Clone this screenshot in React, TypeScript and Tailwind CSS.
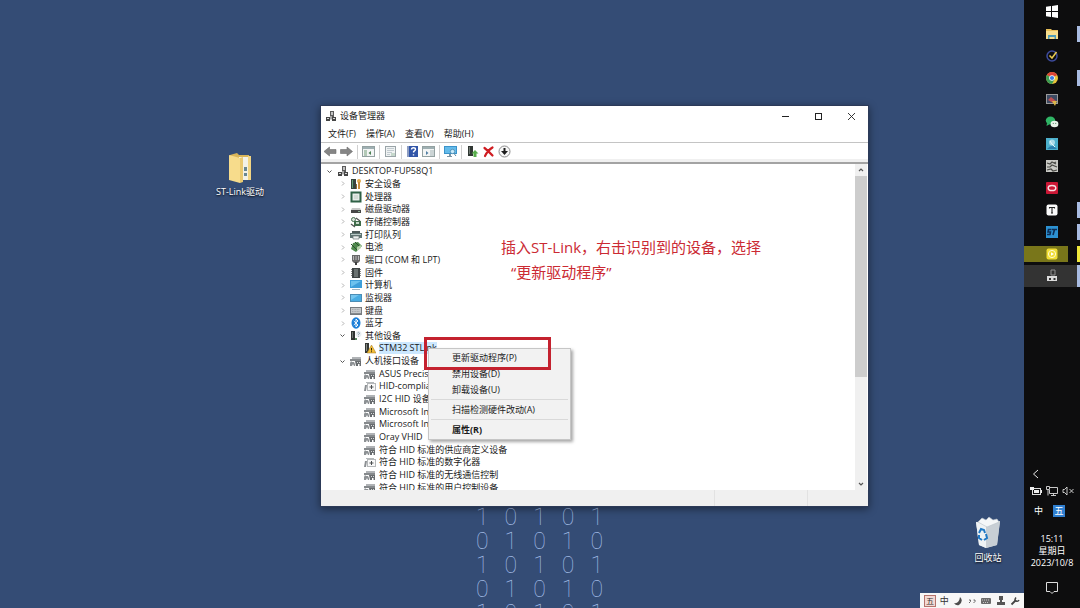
import type { ReactNode } from "react";
import clsx from "clsx";

type IconName =
    | "pc" | "security" | "cpu" | "disk" | "storage" | "printer" | "battery" | "port" | "firmware"
    | "computer" | "monitor" | "keyboard" | "bluetooth" | "other" | "warning" | "hid" | "hidDoc";

type TreeRow = {
    level: 0 | 1 | 2;
    icon: IconName;
    label: string;
    state?: "open" | "closed";
    selected?: boolean;
};

const rows: TreeRow[] = [
    { level: 0, icon: "pc", label: "DESKTOP-FUP58Q1", state: "open" },
    { level: 1, icon: "security", label: "安全设备", state: "closed" },
    { level: 1, icon: "cpu", label: "处理器", state: "closed" },
    { level: 1, icon: "disk", label: "磁盘驱动器", state: "closed" },
    { level: 1, icon: "storage", label: "存储控制器", state: "closed" },
    { level: 1, icon: "printer", label: "打印队列", state: "closed" },
    { level: 1, icon: "battery", label: "电池", state: "closed" },
    { level: 1, icon: "port", label: "端口 (COM 和 LPT)", state: "closed" },
    { level: 1, icon: "firmware", label: "固件", state: "closed" },
    { level: 1, icon: "computer", label: "计算机", state: "closed" },
    { level: 1, icon: "monitor", label: "监视器", state: "closed" },
    { level: 1, icon: "keyboard", label: "键盘", state: "closed" },
    { level: 1, icon: "bluetooth", label: "蓝牙", state: "closed" },
    { level: 1, icon: "other", label: "其他设备", state: "open" },
    { level: 2, icon: "warning", label: "STM32 STLink", selected: true },
    { level: 1, icon: "hid", label: "人机接口设备", state: "open" },
    { level: 2, icon: "hid", label: "ASUS Precisi" },
    { level: 2, icon: "hidDoc", label: "HID-complia" },
    { level: 2, icon: "hid", label: "I2C HID 设备" },
    { level: 2, icon: "hid", label: "Microsoft Inp" },
    { level: 2, icon: "hid", label: "Microsoft Inp" },
    { level: 2, icon: "hid", label: "Oray VHID" },
    { level: 2, icon: "hid", label: "符合 HID 标准的供应商定义设备" },
    { level: 2, icon: "hidDoc", label: "符合 HID 标准的数字化器" },
    { level: 2, icon: "hid", label: "符合 HID 标准的无线通信控制" },
    { level: 2, icon: "hid", label: "符合 HID 标准的用户控制设备" }
];

const indent = { 0: "pl-1", 1: "pl-[17px]", 2: "pl-[31px]" };

const deviceIcons: Record<IconName, ReactNode> = {
    pc: (
        <>
            <path d="M5 1h4v6H5z" fill="#5b5b5b" />
            <path d="M6 2h2v3H6z" fill="#c4c4c4" />
            <path d="M5 6h2v3H5z" fill="#a5a5a5" />
            <path d="M1 7h4v4H1zM7 7h4v4H7z" fill="#454545" />
            <path d="M2 8h2v1H2zM8 8h2v1H8zM5 9h2v1H5z" fill="#d8d8d8" />
        </>
    ),
    security: (
        <>
            <path d="M1 1h5v10H1z" fill="#37433b" />
            <path d="M2 2h1v8H2z" fill="#62a072" />
            <circle cx="9" cy="3" r="2" fill="#e0a94b" />
            <path d="M8 4h2v7H8z" fill="#c98e3a" />
            <path d="M6 6h1v5H6z" fill="#8f6a35" />
        </>
    ),
    cpu: (
        <>
            <rect x="1.5" y="1.5" width="9" height="9" fill="#e6ece8" stroke="#2f6146" strokeWidth="2" />
            <rect x="4" y="4" width="4" height="4" fill="#d3dbd5" />
        </>
    ),
    disk: (
        <>
            <path d="M2 5h8l1 2H1z" fill="#c8c8c8" />
            <path d="M1 7h10v3H1z" fill="#474747" />
            <path d="M8 8h2v1H8z" fill="#8fb59a" />
        </>
    ),
    storage: (
        <>
            <circle cx="3.5" cy="3.5" r="2" fill="#dbe5dc" stroke="#476d50" />
            <path d="M4 5h7v5H4z" fill="#3f6b4a" />
            <path d="M1 8l4 3M6 2l4 3" stroke="#555" strokeWidth="1.3" />
            <path d="M6 6h3v2H6z" fill="#c7d7ca" />
        </>
    ),
    printer: (
        <>
            <path d="M2 2h8v2H2z" fill="#4d5a5a" />
            <path d="M0 4h12v5H0z" fill="#5e7472" />
            <path d="M1 5h10v1H1z" fill="#b9c9c7" />
            <path d="M3 7h6v3H3z" fill="#eef2f2" stroke="#6a7a79" strokeWidth=".7" />
        </>
    ),
    battery: (
        <>
            <path d="M3 2l5-1 4 4-6 6-5-3z" fill="#4f8a4d" />
            <path d="M1 3l6 6M5 1l5 5" stroke="#2c4d2e" />
            <path d="M7 6l4-2v3L7 10z" fill="#b7d2ab" />
        </>
    ),
    port: (
        <>
            <path d="M2 1h8v6l-2 2H4L2 7z" fill="#6a6a6a" />
            <path d="M3 2h1v4H3zM5.500 2h1v4h-1zM8 2h1v4H8z" fill="#b8b8b8" />
            <path d="M5 8h2v3H5z" fill="#3f3f3f" />
        </>
    ),
    firmware: (
        <>
            <path d="M2 1h8v10H2z" fill="#3f4444" />
            <path d="M4 2h4v8H4z" fill="#6b7271" />
            <path d="M1 2h1v1H1zM1 4h1v1H1zM1 6h1v1H1zM1 8h1v1H1zM10 2h1v1h-1zM10 4h1v1h-1zM10 6h1v1h-1zM10 8h1v1h-1z" fill="#8c8c8c" />
        </>
    ),
    computer: (
        <>
            <path d="M0 1h12v8H0z" fill="#3e9fda" />
            <path d="M1 2h10L1 8z" fill="#6dc2ee" />
            <path d="M2 10h8v1H2z" fill="#9fb4c2" />
        </>
    ),
    monitor: (
        <>
            <path d="M0 2h12v8H0z" fill="#4c8db5" />
            <path d="M1 3h10v6H1z" fill="#49ace2" />
            <path d="M1 3h8L1 8z" fill="#75c6ef" />
        </>
    ),
    keyboard: (
        <>
            <rect x=".5" y="2.500" width="11" height="7" fill="#c6c8ca" stroke="#777b7f" />
            <path d="M2 4.500h8M2 6.500h8" stroke="#a5a8ab" strokeDasharray="1 .6" />
            <path d="M1 8h10v1H1z" fill="#85898c" />
        </>
    ),
    bluetooth: (
        <>
            <ellipse cx="6" cy="6" rx="4.500" ry="5.700" fill="#1c7fd8" />
            <path d="M3.800 4l4.200 4-2 2V2l2 2-4.200 4" fill="none" stroke="#fff" strokeWidth=".9" />
        </>
    ),
    other: (
        <>
            <path d="M1 1h4v9H1z" fill="#2f3331" />
            <path d="M2 2h1v6H2z" fill="#6f7773" />
            <path d="M5 8h2v2H5z" fill="#5a8a62" />
            <circle cx="8.500" cy="4" r="3" fill="#e9eef1" />
            <path d="M7.500 3q1-1.300 2 0 0 1-1 1.500v.6M8.500 6v.6" fill="none" stroke="#7890a0" strokeWidth=".8" />
        </>
    ),
    warning: (
        <>
            <path d="M1 1h4v10H1z" fill="#353835" />
            <path d="M2 2h1v7H2z" fill="#858a86" />
            <path d="M7.500 3l4.500 8H3z" fill="#f0bd38" stroke="#a07721" strokeWidth=".5" />
            <path d="M7.500 6v2.500M7.500 9.300v.9" stroke="#2f2510" />
        </>
    ),
    hid: (
        <>
            <path d="M2 2h9v2H2z" fill="#b0b3b6" />
            <path d="M0 4h11v2H0z" fill="#85898c" />
            <path d="M1 6l1 1h2l1 2v2H4L3 9 2 11H0V8z" fill="#8d9194" />
            <path d="M5 6h6v5H9.500V9H8v2H6z" fill="#686c6f" />
            <path d="M7 7h1v1H7zM9 7h1v1H9z" fill="#d5d8d9" />
        </>
    ),
    hidDoc: (
        <>
            <path d="M2 2h8v1H2z" fill="#b4b8ba" />
            <path d="M1 5h2l-1 6H0z" fill="#8b8f92" />
            <rect x="3.500" y="3.500" width="8" height="7" fill="#f8f8f8" stroke="#b5b8ba" />
            <path d="M7.500 5v4M5.500 7h4" stroke="#4a4e51" />
        </>
    )
};

function DeviceIcon({ name }: { name: IconName }) {
    return (
        <svg viewBox="0 0 12 12" className="size-3 shrink-0" aria-hidden="true">
            {deviceIcons[name]}
        </svg>
    );
}

function Chevron({ state }: { state?: "open" | "closed" }) {
    return (
        <svg viewBox="0 0 9 9" className="size-[9px] shrink-0" aria-hidden="true">
            {state === "open" && <path d="M2.500 3.500l2 2 2-2" fill="none" stroke="#555" />}
            {state === "closed" && <path d="M4 2.500l2 2-2 2" fill="none" stroke="#a8a8a8" strokeWidth=".9" />}
        </svg>
    );
}

function DeviceTree() {
    return (
        <ul role="tree" aria-label="设备" className="grid h-[330px] auto-rows-fr pt-px">
            {rows.map((row, i) => (
                <li
                    key={i}
                    role="treeitem"
                    aria-level={row.level + 1}
                    aria-selected={!!row.selected}
                    className={clsx("flex min-h-0 items-center gap-[3px] leading-3 whitespace-nowrap", indent[row.level])}
                >
                    {row.level < 2 && <Chevron state={row.state} />}
                    {row.level === 2 && <span className="w-[9px]" />}
                    <DeviceIcon name={row.icon} />
                    <span className={clsx(row.selected && "bg-[#cce8ff]")}>{row.label}</span>
                </li>
            ))}
        </ul>
    );
}

const panel = (
    <>
        <rect x=".5" y="1.500" width="12" height="10" fill="#f3f5f5" stroke="#93a1a1" />
        <path d="M1 2h11v2H1z" fill="#9fb0b3" />
    </>
);

const tools: { label: string; art: ReactNode; divider?: boolean }[] = [
    { label: "后退", art: <path d="M0 6.500L5.500 2v2.500H12v4H5.500V11z" fill="#858585" stroke="#6c6c6c" strokeWidth=".6" /> },
    { label: "前进", art: <path d="M12.500 6.500L7 2v2.500H.5v4H7V11z" fill="#858585" stroke="#6c6c6c" strokeWidth=".6" />, divider: true },
    {
        label: "显示/隐藏控制台树",
        art: <>{panel}<path d="M2 5h3v6H2z" fill="#b3c9b7" /><path d="M9 6L6.500 8 9 10z" fill="#4b8154" /></>,
        divider: true
    },
    {
        label: "属性",
        art: (
            <>
                <rect x="1.500" y="1.500" width="10" height="10" fill="#f0f3f3" stroke="#9aa4a8" />
                <path d="M3 3.500h7M3 5.500h7M3 7.500h5M3 9.500h3" stroke="#c2cbd0" />
                <path d="M7 8h4v3H7z" fill="#c6d8cc" />
            </>
        ),
        divider: true
    },
    {
        label: "帮助",
        art: (
            <>
                <path d="M1 1h11v11H1z" fill="#3155a8" />
                <path d="M1 1h2v11H1z" fill="#8d9dc2" />
                <path d="M5.500 4.500q0-1.800 2-1.800t2 1.600q0 1-1.900 2.300v1M7.500 9.200v1.300" fill="none" stroke="#fff" strokeWidth="1.400" />
            </>
        )
    },
    {
        label: "显示/隐藏操作窗格",
        art: <>{panel}<path d="M8 5h4v6H8z" fill="#cbd4d5" /><path d="M4 6l2.500 2L4 10z" fill="#527fa4" /></>,
        divider: true
    },
    {
        label: "扫描检测硬件改动",
        art: (
            <>
                <path d="M0 1h13v8H0z" fill="#3b93ca" />
                <path d="M1 2h11v6H1z" fill="#64bbea" />
                <path d="M3 11h5v1H3zM5 9h2v2H5z" fill="#7c93a2" />
                <circle cx="8.500" cy="6.500" r="2.200" fill="#c8eafa" stroke="#3b7ba5" strokeWidth=".7" />
                <path d="M10 8.500l2 2.500" stroke="#5c87a2" />
            </>
        ),
        divider: true
    },
    {
        label: "更新驱动程序",
        art: (
            <>
                <path d="M2 1h5v10H2z" fill="#303733" />
                <path d="M3 2h1v7H3z" fill="#707a73" />
                <path d="M9 5l3.500 3.500h-2V12h-3V8.500h-2z" fill="#58ad4c" />
            </>
        )
    },
    { label: "卸载设备", art: <path d="M2.500 3q4 3 8 7.500M10.500 2.500Q6 5 3 11" fill="none" stroke="#cf1d22" strokeWidth="2.200" strokeLinecap="round" /> },
    {
        label: "禁用设备",
        art: (
            <>
                <circle cx="6.500" cy="6.500" r="5.500" fill="#f7f7f7" stroke="#8c8c8c" />
                <path d="M5.500 3h2v3h2.500L6.500 10 3 6h2.500z" fill="#1d1d1d" />
            </>
        )
    }
];

function Toolbar() {
    return (
        <div role="toolbar" className="flex h-4 items-center gap-[3px] pt-px pl-[3px]">
            {tools.map((tool) => (
                <div key={tool.label} className="flex items-center gap-1">
                    <button type="button" aria-label={tool.label} title={tool.label}>
                        <svg viewBox="0 0 13 13" className="size-[13px]" aria-hidden="true">{tool.art}</svg>
                    </button>
                    {tool.divider && <span className="mr-px h-3.5 w-px bg-[#d0d0d0]" />}
                </div>
            ))}
        </div>
    );
}

function DeviceManager() {
    return (
        <section
            aria-label="设备管理器"
            className="absolute top-[105px] left-[320px] flex h-[402px] w-[549px] flex-col border border-[#2c3a58] bg-white text-[9px] text-[#1a1a1a] shadow-[0_2px_8px_rgba(0,0,0,0.45)]"
        >
            {/* title bar */}
            <header className="flex h-5 shrink-0 items-center gap-[3px] pl-1">
                <DeviceIcon name="pc" />
                <h1 className="flex-1 leading-3">设备管理器</h1>
                <div className="flex text-[#222]">
                    <button type="button" aria-label="最小化" className="flex w-[33px] justify-center">
                        <svg viewBox="0 0 9 9" className="size-[9px]"><path d="M1 4.500h7" stroke="currentColor" /></svg>
                    </button>
                    <button type="button" aria-label="最大化" className="flex w-[33px] justify-center">
                        <svg viewBox="0 0 9 9" className="size-[9px]"><rect x="1.500" y="1.500" width="6" height="6" fill="none" stroke="currentColor" /></svg>
                    </button>
                    <button type="button" aria-label="关闭" className="flex w-[33px] justify-center">
                        <svg viewBox="0 0 9 9" className="size-[9px]"><path d="M1 1l7 7M8 1L1 8" stroke="currentColor" strokeWidth=".9" /></svg>
                    </button>
                </div>
            </header>

            {/* menu bar */}
            <nav className="flex h-[17px] shrink-0 items-center gap-2.5 border-b border-[#c4c4c4] pl-[7px] leading-3">
                <button type="button">文件(F)</button>
                <button type="button">操作(A)</button>
                <button type="button">查看(V)</button>
                <button type="button">帮助(H)</button>
            </nav>

            <Toolbar />
            <div className="h-[5px] shrink-0 border-b-2 border-[#a3a3a3] bg-[#f0f0f0]" />

            {/* device tree + scrollbar */}
            <div className="flex min-h-0 flex-1">
                <div className="flex-1 overflow-hidden">
                    <DeviceTree />
                </div>
                <div className="mr-px flex w-3 flex-col bg-[#f0f0f0] text-[#555]">
                    <button type="button" aria-label="向上滚动" className="flex h-3 items-center justify-center">
                        <svg viewBox="0 0 8 8" className="size-2"><path d="M2 5l2-2 2 2" fill="none" stroke="currentColor" strokeWidth="1.200" /></svg>
                    </button>
                    <div className="flex-1">
                        <div className="h-2/3 bg-[#cdcdcd]" />
                    </div>
                    <button type="button" aria-label="向下滚动" className="flex h-3 items-center justify-center">
                        <svg viewBox="0 0 8 8" className="size-2"><path d="M2 3l2 2 2-2" fill="none" stroke="currentColor" strokeWidth="1.200" /></svg>
                    </button>
                </div>
            </div>

            {/* status bar */}
            <footer className="flex h-4 shrink-0 bg-[#f0f0f0]">
                <span className="flex-1 border-r border-[#e2e2e2]" />
                <span className="w-[93px] border-r border-[#e2e2e2]" />
                <span className="w-[60px]" />
            </footer>
        </section>
    );
}

function ContextMenu() {
    return (
        <div
            role="menu"
            className="absolute top-[348px] left-[428px] flex w-[143px] flex-col border border-[#c6c6c6] bg-[#f2f2f2] py-px text-[9px] leading-3 text-[#1a1a1a] shadow-[2px_2px_3px_rgba(0,0,0,0.35)]"
        >
            <button type="button" role="menuitem" className="h-4 pl-[23px] text-left">更新驱动程序(P)</button>
            <button type="button" role="menuitem" className="h-4 pl-[23px] text-left">禁用设备(D)</button>
            <button type="button" role="menuitem" className="h-4 pl-[23px] text-left">卸载设备(U)</button>
            <hr className="mx-0.5 my-px border-[#d9d9d9]" />
            <button type="button" role="menuitem" className="h-[17px] pl-[23px] text-left">扫描检测硬件改动(A)</button>
            <hr className="mx-0.5 my-px border-[#d9d9d9]" />
            <button type="button" role="menuitem" className="h-[17px] pl-[23px] text-left font-bold">属性(R)</button>
        </div>
    );
}

const apps: { label: string; art: ReactNode; mark?: string; tile?: string }[] = [
    { label: "开始", art: <path d="M1 1.800l5-.8v5H1zM7 .9l6-.9v6H7zM1 7h5v5l-5-.8zM7 7h6v6l-6-.9z" fill="#fff" /> },
    {
        label: "文件资源管理器",
        art: (
            <>
                <path d="M1 2h5l1 1h6v9H1z" fill="#e5bd57" />
                <path d="M1 4h12v8H1z" fill="#f7de8e" />
                <path d="M3 8h8v4H9.500v-2h-5v2H3z" fill="#4f9cb8" />
            </>
        ),
        mark: "bg-[#a9bce2]"
    },
    {
        label: "待办",
        art: (
            <>
                <circle cx="7" cy="7" r="5" fill="none" stroke="#3d4b9d" strokeWidth="1.500" />
                <path d="M4.500 6.500L7 9l4.500-6" fill="none" stroke="#e8c951" strokeWidth="1.500" />
            </>
        )
    },
    {
        label: "Chrome",
        art: (
            <>
                <circle cx="7" cy="7" r="6" fill="#e8c33a" />
                <path d="M7 7L1.800 4a6 6 0 0 1 10.400 0z" fill="#dc4437" />
                <path d="M7 7L1.800 4A6 6 0 0 0 7 13l2.500-4.500z" fill="#3b9b54" />
                <circle cx="7" cy="7" r="2.800" fill="#fff" />
                <circle cx="7" cy="7" r="2.100" fill="#3f7ee0" />
            </>
        ),
        mark: "bg-[#a9bce2]"
    },
    {
        label: "远程桌面",
        art: (
            <>
                <path d="M1 1h12v10H1z" fill="#9a9a9a" />
                <path d="M2 2h10v8H2z" fill="#3d4a62" />
                <path d="M3 7l3-3 5 4-3 2z" fill="#c04f50" />
                <path d="M7 8h5l-2 5z" fill="#dbb64a" />
            </>
        )
    },
    {
        label: "微信",
        art: (
            <>
                <ellipse cx="5.500" cy="5.500" rx="4.700" ry="3.900" fill="#2fb565" />
                <path d="M2 8l-.5 3L5 9z" fill="#2fb565" />
                <ellipse cx="9.500" cy="9" rx="3.900" ry="3.200" fill="#e9f3ea" />
                <path d="M8.200 8.400h.1M10.700 8.400h.1" stroke="#3a6e4b" strokeLinecap="round" />
            </>
        )
    },
    {
        label: "图片",
        art: (
            <>
                <path d="M1 1h12v12H1z" fill="#4cb0cc" />
                <circle cx="7" cy="5.500" r="3" fill="#a9dbe8" />
                <path d="M2 12q5-6 10 0z" fill="#2b7fae" />
                <path d="M5 4l2 3 3 3" fill="none" stroke="#e9f7fa" />
            </>
        )
    },
    {
        label: "地图",
        art: (
            <>
                <path d="M1 1h12v12H1z" fill="#c9c9c4" />
                <path d="M2 4l3 1 2-2 4 2M2 8h3l2-2 5 2M2 11l4-1 2 2 4-1M9 4l2-1" fill="none" stroke="#4a4a46" strokeWidth="1.200" />
            </>
        )
    },
    {
        label: "向日葵",
        art: (
            <>
                <rect x="1" y="1" width="12" height="12" rx="1" fill="#cb1735" />
                <ellipse cx="7" cy="7" rx="3.800" ry="2.600" fill="none" stroke="#f7dfe3" strokeWidth="1.500" />
            </>
        )
    },
    {
        label: "Typora",
        art: (
            <>
                <rect x="1.500" y="1.500" width="11" height="11" rx="2" fill="#fafafa" />
                <path d="M4.500 5.500V4.500h5v1M7 4.500v5.500M6 10h2" fill="none" stroke="#222" strokeWidth="1.100" />
            </>
        ),
        mark: "bg-[#a9bce2]"
    },
    {
        label: "STM32",
        art: (
            <>
                <path d="M1 1h12v12H1z" fill="#2c91d1" />
                <path d="M6.500 4.500H3.500L3 7h2.500L5 9.500H2M7 4.500h5M9.500 4.500L8 10" fill="none" stroke="#0c2d55" strokeWidth="1.600" />
            </>
        ),
        mark: "bg-[#a9bce2]"
    },
    {
        label: "录屏",
        art: (
            <>
                <rect x="1.500" y="1.500" width="11" height="11" rx="2" fill="#f0dc32" />
                <circle cx="7" cy="7" r="3.600" fill="none" stroke="#fffbd0" />
                <path d="M6 5.200L9 7 6 8.800z" fill="#fff" />
            </>
        ),
        mark: "bg-[#f0e83c]",
        tile: "bg-[#79761a]"
    },
    {
        label: "设备管理器",
        art: (
            <>
                <path d="M6 1h4v5H6z" fill="none" stroke="#909090" />
                <path d="M2 7h10v5H2z" fill="#dcdcdc" />
                <path d="M4 9h2v2H4zM8.500 9h2v2h-2z" fill="#333" />
            </>
        ),
        mark: "bg-[#a9bce2]",
        tile: "bg-[#333333]"
    }
];

function Taskbar() {
    return (
        <aside className="flex w-14 shrink-0 flex-col bg-[#0d0d0e] text-white">
            <nav aria-label="任务栏" className="flex flex-col pt-px">
                {apps.map((app, i) => (
                    <button
                        key={app.label}
                        type="button"
                        aria-label={app.label}
                        className={clsx("flex h-[22px] items-center", i === 12 && app.tile)}
                    >
                        <span className={clsx("flex h-4 w-11 items-center justify-end pr-[9px]", i !== 12 && app.tile)}>
                            <svg viewBox="0 0 14 14" className="size-3.5" aria-hidden="true">{app.art}</svg>
                        </span>
                        <span className={clsx("ml-auto w-[3px]", i === 12 ? "h-[22px]" : "h-4", app.mark)} />
                    </button>
                ))}
            </nav>

            {/* tray */}
            <div className="mt-auto flex flex-col pb-[13px]">
                <button type="button" aria-label="显示隐藏的图标" className="ml-[7px] w-[9px]">
                    <svg viewBox="0 0 9 10" className="h-2.5 w-[9px]"><path d="M7 1L2.500 5 7 9" fill="none" stroke="#e8e8e8" /></svg>
                </button>
                <div className="mt-[7px] flex items-center justify-between px-1.5">
                    <svg viewBox="0 0 12 10" className="h-2.5 w-3" aria-label="电池">
                        <rect x="2.500" y="2.500" width="8" height="6" fill="none" stroke="#ddd" />
                        <path d="M4 4h5v3H4zM11 4h1v3h-1zM0 1h4v3H0z" fill="#eee" />
                    </svg>
                    <svg viewBox="0 0 12 10" className="h-2.5 w-3" aria-label="网络">
                        <path d="M4 1.500h7.500v6H3.500V4M5 9.500h5M7.500 7.500v2M.5 .5h3v3h-3zM2 4v5.500" fill="none" stroke="#ddd" strokeWidth=".9" />
                    </svg>
                    <svg viewBox="0 0 12 10" className="h-2.5 w-3" aria-label="静音">
                        <path d="M1 3.500h1.500L5 1v8L2.500 6.500H1zM7.500 3l4 4M11.500 3l-4 4" fill="none" stroke="#ddd" strokeWidth=".9" />
                    </svg>
                </div>
                <div className="mt-[9px] flex items-center gap-2.5 pl-2.5 text-[9px] leading-3">
                    <button type="button">中</button>
                    <button type="button" className="w-3 bg-[#2f7fd0] text-center">五</button>
                </div>
                <div className="mt-4 text-center text-[9px] leading-3">
                    <div>15:11</div>
                    <div>星期日</div>
                    <div>2023/10/8</div>
                </div>
                <button type="button" aria-label="通知" className="mt-3 flex justify-center">
                    <svg viewBox="0 0 14 14" className="size-3.5"><path d="M1.500 1.500h11v9H9l-2 2-2-2H1.500z" fill="none" stroke="#ddd" /></svg>
                </button>
            </div>
        </aside>
    );
}

function ImeBar() {
    return (
        <div className="absolute right-0 bottom-0 flex h-[15px] w-[104px] items-center justify-between bg-[#f7f7f7] px-1 text-[9px] leading-3 text-[#333]">
            <button type="button" className="w-3 border border-[#b5736c] bg-[#f3d9d4] text-center text-[8px] leading-[10px]">五</button>
            <button type="button">中</button>
            <button type="button" aria-label="半角">
                <svg viewBox="0 0 10 10" className="size-2.5"><path d="M7 1q4 4-1 8-3 1-5-2 5 1 6-6z" fill="#4d4d4d" /></svg>
            </button>
            <button type="button" aria-label="标点">
                <svg viewBox="0 0 10 10" className="size-2.5"><path d="M2 4h1.500v1.500L2 7M6.500 4H8v1.500L6.500 7" fill="none" stroke="#666" /></svg>
            </button>
            <button type="button" aria-label="软键盘">
                <svg viewBox="0 0 12 10" className="h-2.5 w-3"><rect x="1" y="2" width="10" height="6" rx="1" fill="#6b6b6b" /><path d="M2 4h8M3 6.500h6" stroke="#ddd" strokeWidth=".8" strokeDasharray="1 1" /></svg>
            </button>
            <button type="button" aria-label="用户">
                <svg viewBox="0 0 10 10" className="size-2.5"><path d="M3 0h4v4H3zM4 4h2v2H4zM1 6h8v3H1z" fill="#555" /></svg>
            </button>
            <button type="button" aria-label="设置">
                <svg viewBox="0 0 10 10" className="size-2.5"><path d="M1.500 8.500L6 4" stroke="#444" strokeWidth="1.800" /><path d="M6 1.500q-2 2.500 0 3.500t3-1" fill="none" stroke="#444" strokeWidth="1.500" /></svg>
            </button>
        </div>
    );
}

const digits = ["10101", "01010", "10101", "01010", "10101"];

export default function App() {
    return (
        <div className="flex h-screen overflow-hidden font-['Open_Sans','Noto_Sans_CJK_SC',sans-serif]">
            <main className="relative flex-1 overflow-hidden bg-[#344c75]">
                {/* wallpaper digits */}
                <div
                    aria-hidden="true"
                    className="absolute top-[506px] left-[468px] grid w-[143px] grid-cols-5 text-center font-['Roboto'] text-[23px] leading-[24px] font-thin text-[#a3bde6]"
                >
                    {digits.flatMap((line, r) => line.split("").map((d, c) => <span key={`${r}-${c}`}>{d}</span>))}
                </div>

                {/* desktop shortcuts */}
                <button type="button" className="absolute top-[152px] left-[210px] flex w-[60px] flex-col items-center text-[9px] leading-3 text-white [text-shadow:0_1px_2px_#000]">
                    <svg viewBox="0 0 26 33" className="h-[33px] w-[26px]" aria-hidden="true">
                        <path d="M3 3l7-2 2 2h10v24H3z" fill="#d9b559" />
                        <path d="M12 5h10v23H12z" fill="#f3f1e6" />
                        <path d="M17 15h3v4h-3zM17 21h3v3h-3z" fill="#6a8790" />
                        <path d="M2 3l11 3v25L2 28z" fill="#f7dc8c" />
                        <path d="M13 6l3-1v25l-3 1z" fill="#eac970" />
                        <path d="M21 4h3v24h-3z" fill="#f2d583" />
                    </svg>
                    <span className="mt-px">ST-Link驱动</span>
                </button>
                <button type="button" className="absolute top-[516px] left-[958px] flex w-[60px] flex-col items-center text-[9px] leading-3 text-white [text-shadow:0_1px_2px_#000]">
                    <svg viewBox="0 0 28 32" className="h-8 w-7" aria-hidden="true">
                        <path d="M2 6l24-1-3 24-11 3-7-3z" fill="#d5dbe0" />
                        <path d="M2 6l10 3v23l-7-3z" fill="#eef2f4" />
                        <path d="M12 9l14-4-3 24-11 3z" fill="#c8cfd5" />
                        <path d="M4 6l4-4 4 2 3-3 4 3 4-1 2 3-12 5z" fill="#f5f7f8" stroke="#b8c1c8" strokeWidth=".6" />
                        <path d="M5 17l2-4 3 1 1 3M12 18l1 4-3 2M8 24l-3-2v-3" fill="none" stroke="#2078c4" strokeWidth="2" />
                    </svg>
                    <span className="mt-1">回收站</span>
                </button>

                <DeviceManager />
                <ContextMenu />

                {/* annotation */}
                <div className="absolute top-[337px] left-[424px] h-[33px] w-[127px] border-3 border-[#c4222f]" />
                <p className="absolute top-[235px] left-[501px] text-[15px] leading-[25px] whitespace-nowrap text-[#cb2a33]">
                    插入ST-Link，右击识别到的设备，选择
                    <br />
                    <span className="pl-2.5">“更新驱动程序”</span>
                </p>

                <ImeBar />
            </main>
            <Taskbar />
        </div>
    );
}
